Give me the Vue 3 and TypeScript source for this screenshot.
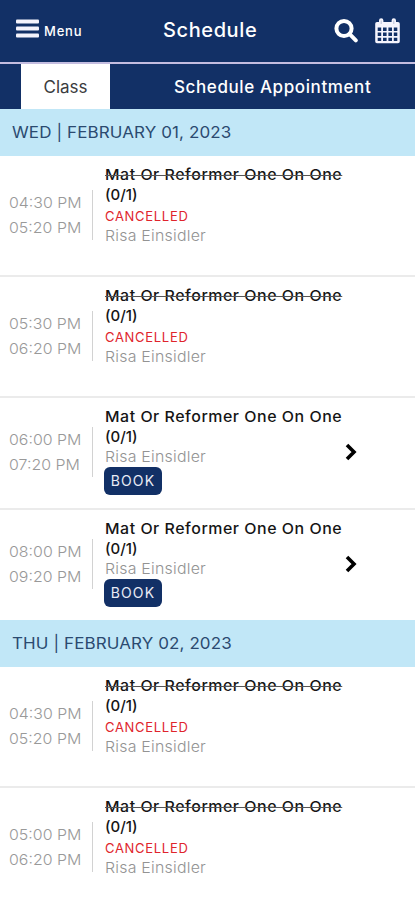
<script setup lang="ts">
interface Session {
  start: string
  end: string
  cancelled: boolean
}
interface Day {
  label: string
  sessions: Session[]
}

const days: Day[] = [
  {
    label: 'WED | FEBRUARY 01, 2023',
    sessions: [
      { start: '04:30 PM', end: '05:20 PM', cancelled: true },
      { start: '05:30 PM', end: '06:20 PM', cancelled: true },
      { start: '06:00 PM', end: '07:20 PM', cancelled: false },
      { start: '08:00 PM', end: '09:20 PM', cancelled: false },
    ],
  },
  {
    label: 'THU | FEBRUARY 02, 2023',
    sessions: [
      { start: '04:30 PM', end: '05:20 PM', cancelled: true },
      { start: '05:00 PM', end: '06:20 PM', cancelled: true },
    ],
  },
]
</script>

<template>
  <div class="screen">
    <header class="topbar">
      <div class="menu">
        <svg class="bars" viewBox="0 0 23 20" aria-hidden="true">
          <rect x="0" y="0.5" width="23" height="4" rx="1" />
          <rect x="0" y="7.5" width="23" height="4" rx="1" />
          <rect x="0" y="14.5" width="23" height="4" rx="1" />
        </svg>
        <span class="menu-label">Menu</span>
      </div>
      <h1 class="title">Schedule</h1>
      <div class="actions">
        <svg class="search" viewBox="0 0 24 24" aria-hidden="true">
          <circle cx="10" cy="10" r="7.6" />
          <path d="M15.7 15.7L21.8 21.8" />
        </svg>
        <svg class="calendar" viewBox="0 0 25 26" aria-hidden="true">
          <path
            fill-rule="evenodd"
            d="M2 4H4V2.5a2.2 2.2 0 0 1 4.4 0V4h8.2V2.5a2.2 2.2 0 0 1 4.4 0V4h2a1.8 1.8 0 0 1 1.8 1.8V23.4a1.8 1.8 0 0 1-1.8 1.8H2A1.8 1.8 0 0 1 .2 23.4V5.8A1.8 1.8 0 0 1 2 4Z
            M2.7 9.5v3.4h3.5V9.5ZM8 9.5v3.4h3.6V9.5ZM13.4 9.5v3.4h3.6V9.5ZM18.8 9.5v3.4h3.5V9.5Z
            M2.7 14.6v3.4h3.5v-3.4ZM8 14.6v3.4h3.6v-3.4ZM13.4 14.6v3.4h3.6v-3.4ZM18.8 14.6v3.4h3.5v-3.4Z
            M2.7 19.7v3.2h3.5v-3.2ZM8 19.7v3.2h3.6v-3.2ZM13.4 19.7v3.2h3.6v-3.2ZM18.8 19.7v3.2h3.5v-3.2Z"
          />
          <path class="ring" d="M6.2 2.5v3.5M18.8 2.5v3.5" />
        </svg>
      </div>
    </header>

    <nav class="tabs">
      <div class="tab active"><span>Class</span></div>
      <div class="tab appointment"><span>Schedule Appointment</span></div>
    </nav>

    <section v-for="day in days" :key="day.label">
      <h2 class="day"><span class="wide">{{ day.label }}</span></h2>
      <article
        v-for="session in day.sessions"
        :key="session.start"
        class="session"
        :class="{ open: !session.cancelled }"
      >
        <div class="times">
          <span class="wide">{{ session.start }}</span>
          <span class="wide">{{ session.end }}</span>
        </div>
        <div class="details">
          <div class="name">
            <span class="wide" :class="{ struck: session.cancelled }">Mat Or Reformer One On One</span>
          </div>
          <div class="count">(0/1)</div>
          <div v-if="session.cancelled" class="cancelled">CANCELLED</div>
          <div class="teacher"><span class="wide">Risa Einsidler</span></div>
          <button v-if="!session.cancelled" class="book">BOOK</button>
        </div>
        <svg v-if="!session.cancelled" class="chevron" viewBox="0 0 12 18" aria-hidden="true">
          <path d="M2 2L9 9L2 16" />
        </svg>
      </article>
    </section>
  </div>
</template>

<style>
body {
  background: #fff;
  overflow: hidden;
}
</style>

<style scoped>
.screen {
  width: 415px;
  height: 900px;
  overflow: hidden;
  background: #fff;
  font-family: Inter, 'Open Sans', sans-serif;
  white-space: nowrap;
}
.wide {
  display: inline-block;
  transform: scaleX(1.062);
  transform-origin: left center;
}
.topbar {
  box-sizing: border-box;
  height: 64px;
  display: grid;
  grid-template-columns: 163px 1fr 81px;
  align-items: start;
  background: #123066;
  border-bottom: 2px solid #c4bde0;
  color: #fff;
}
.menu {
  display: flex;
  align-items: flex-start;
  gap: 5px;
  padding: 19px 0 0 16px;
}
.bars {
  width: 23px;
  height: 20px;
  fill: #f4f3fc;
}
.menu-label {
  padding-top: 2px;
  font-size: 13px;
  line-height: 20px;
  font-weight: 500;
  letter-spacing: 0.8px;
}
.title {
  margin: 0;
  padding-top: 17px;
  font-size: 20px;
  line-height: 26px;
  font-weight: 500;
  letter-spacing: 0.6px;
}
.actions {
  display: flex;
  gap: 17px;
  padding-top: 18px;
}
.search {
  width: 24px;
  height: 25px;
  fill: none;
  stroke: #fff;
  stroke-width: 4;
  stroke-linecap: round;
}
.calendar {
  width: 25px;
  height: 26px;
  fill: #f5f4fd;
}
.ring {
  fill: none;
  stroke: #b9bfd6;
  stroke-width: 1;
}
.tabs {
  box-sizing: border-box;
  height: 45px;
  display: flex;
  padding-left: 21px;
  background: #123066;
}
.tab {
  line-height: 46px;
}
.active {
  width: 89px;
  text-align: center;
  background: #fff;
  color: #3b3b40;
  font-size: 17px;
  letter-spacing: 0;
}
.appointment {
  padding-left: 64px;
  color: #fff;
  font-size: 17px;
  font-weight: 500;
  letter-spacing: 0.6px;
}
.day {
  margin: 0;
  height: 46.5px;
  padding-left: 12px;
  background: #c1e7f7;
  color: #2b4a70;
  font-size: 16px;
  line-height: 47px;
  font-weight: 400;
  letter-spacing: 0.1px;
}
.session {
  box-sizing: border-box;
  height: 121.1px;
  display: flex;
  align-items: center;
  padding-left: 9px;
  border-bottom: 2px solid #ebebeb;
}
.session.open {
  height: 112.4px;
  padding-bottom: 2px;
}
.session.open:last-child {
  height: 110px;
  border-bottom: 0;
}
.times {
  box-sizing: border-box;
  width: 84px;
  height: 50px;
  display: flex;
  flex-direction: column;
  border-right: 1px solid #d2d2d2;
  color: #999;
  font-size: 15px;
  line-height: 25px;
  font-weight: 300;
}
.times .wide {
  align-self: flex-start;
}
.details {
  align-self: flex-start;
  width: 240px;
  padding: 9px 0 0 12px;
  line-height: 20px;
}
.name,
.count {
  height: 20px;
  color: #151515;
  font-size: 15px;
  font-weight: 500;
  letter-spacing: 0.5px;
}
.count {
  letter-spacing: 0;
}
.struck {
  text-decoration: line-through 1px #555;
}
.cancelled {
  padding-top: 1px;
  color: #e0242c;
  font-size: 13px;
  letter-spacing: 0.7px;
}
.teacher {
  height: 20px;
  color: #939393;
  font-size: 15px;
  font-weight: 300;
  letter-spacing: 0.2px;
}
.book {
  display: block;
  width: 58px;
  height: 28px;
  margin: 0 0 0 -1px;
  padding: 0;
  border: 0;
  border-radius: 6px;
  background: #123066;
  color: #e8ebf5;
  font-family: inherit;
  font-size: 14px;
  line-height: 28px;
  letter-spacing: 1.1px;
}
.chevron {
  width: 12px;
  height: 18px;
  fill: none;
  stroke: #000;
  stroke-width: 3.6;
}
</style>
